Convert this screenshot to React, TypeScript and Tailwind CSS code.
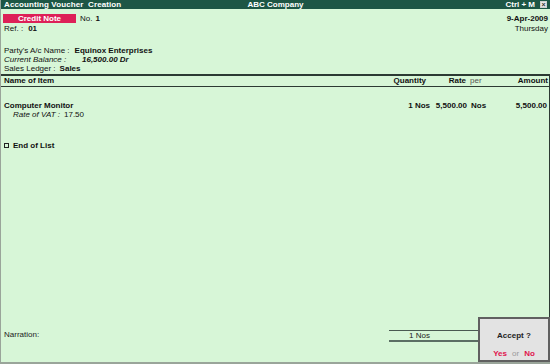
import React from 'react';

const font = "font-['Liberation_Sans',Arial,sans-serif]";

function TitleBar() {
  return (
    <div className="grid h-[9px] grid-cols-[1fr_auto_1fr] items-center bg-[#1d5645] px-[3px] text-[8px] font-bold leading-none text-white">
      <span className="tracking-[0.1px]">Accounting Voucher&nbsp; Creation</span>
      <span>ABC Company</span>
      <div className="flex items-center justify-end gap-[5px]">
        <span>Ctrl + M</span>
        <span className="flex h-[7px] w-[7px] items-center justify-center border border-[#cfcfcf] bg-[#e8e8e8] text-[7px] leading-none text-[#333]">×</span>
      </div>
    </div>
  );
}

function Header() {
  return (
    <div className="flex h-[65px] flex-col pr-[2px] text-[8px] leading-none text-[#111]">
      <div className="mt-[5px] flex h-[9px] items-center">
        <div className="ml-[2px] flex h-[9px] w-[73px] items-center justify-center bg-[#dd2058] font-bold text-white">
          Credit Note
        </div>
        <span className="ml-[4px]">No.</span>
        <span className="ml-[3px] font-bold">1</span>
        <span className="ml-auto font-bold">9-Apr-2009</span>
      </div>
      <div className="mt-[1px] flex h-[9px] items-center pl-[3px]">
        <span>Ref.&nbsp;:</span>
        <span className="ml-[5px] font-bold">01</span>
        <span className="ml-auto">Thursday</span>
      </div>
      <div className="mt-[13px] flex h-[9px] items-center pl-[3px]">
        <span>Party's A/c Name :</span>
        <span className="ml-[5px] font-bold">Equinox Enterprises</span>
      </div>
      <div className="flex h-[9px] items-center pl-[3px]">
        <span className="w-[78px] italic">Current Balance :</span>
        <span className="font-bold italic">16,500.00 Dr</span>
      </div>
      <div className="flex h-[9px] items-center pl-[3px]">
        <span>Sales Ledger :</span>
        <span className="ml-[4px] font-bold">Sales</span>
      </div>
    </div>
  );
}

function ItemRow({ name, qty, rate, per, amount }: { name: string; qty: string; rate: string; per: string; amount: string }) {
  return (
    <div className="flex h-[9px] items-center font-bold">
      <span className="flex-1">{name}</span>
      <span className="w-[60px] text-right">{qty}</span>
      <span className="w-[37px] text-right">{rate}</span>
      <span className="ml-[4px] w-[40px]">{per}</span>
      <span className="w-[36px] text-right">{amount}</span>
    </div>
  );
}

export default function App() {
  return (
    <div className={`${font} relative h-[364px] w-[550px] overflow-hidden border-b-2 border-l border-b-[#9aa59a] border-l-[#9aa59a] bg-[#d7f6d7]`}>
      <TitleBar />
      <Header />

      <div className="flex h-[243px] flex-col border-t-2 border-r border-t-[#2c3a33] border-r-[#2c3a33] text-[8px] leading-none text-[#111]">
        <div className="flex h-[11px] items-center border-b border-b-[#2c3a33] pl-[3px] pr-[1px] font-bold">
          <span className="flex-1">Name of Item</span>
          <span className="w-[57px] text-right">Quantity</span>
          <span className="ml-[3px] w-[37px] text-right">Rate</span>
          <span className="ml-[4px] w-[40px] font-normal text-[#555]">per</span>
          <span className="w-[38px] text-right">Amount</span>
        </div>

        <div className="mt-[14px] pl-[3px] pr-[2px]">
          <ItemRow name="Computer Monitor" qty="1 Nos" rate="5,500.00" per="Nos" amount="5,500.00" />
          <div className="flex h-[10px] items-center pl-[9px]">
            <span className="italic">Rate of VAT :</span>
            <span className="ml-[4px]">17.50</span>
          </div>
        </div>

        <div className="mt-[21px] flex h-[9px] items-center pl-[3px] font-bold">
          <span className="mr-[4px] inline-block h-[5px] w-[5px] border border-[#222]" />
          End of List
        </div>
      </div>

      <div className="flex h-[45px] items-start text-[8px] leading-none text-[#222]">
        <div className="flex w-[388px] pl-[3px] pt-[14px]">
          <span>Narration:</span>
        </div>
        <div className="mt-[13px] flex w-[90px] flex-col">
          <div className="h-[1px] bg-[#4a5a52]" />
          <div className="flex h-[9px] items-center pl-[20px]">1 Nos</div>
          <div className="h-[2px] bg-[#5b6e64]" />
        </div>
      </div>

      <div className="absolute bottom-0 right-0 flex h-[45px] w-[72px] flex-col items-center border-2 border-[#606060] bg-[#e3e3e3] text-[8px] leading-none">
        <span className="mt-[13px] font-bold text-[#222]">Accept ?</span>
        <div className="mt-auto mb-[2px] flex items-center gap-[5px] font-bold">
          <span className="text-[#e0134d]">Yes</span>
          <span className="font-normal text-[#9a9a9a]">or</span>
          <span className="text-[#e0134d]">No</span>
        </div>
      </div>
    </div>
  );
}
